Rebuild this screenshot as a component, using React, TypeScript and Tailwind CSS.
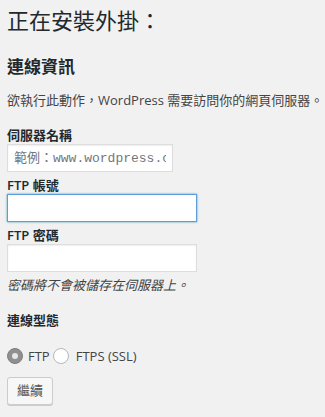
import { useState } from "react";

const font = "font-['Open_Sans','Noto_Sans_CJK_TC',sans-serif]";

function Field({ label, focused, placeholder }: { label: string; focused?: boolean; placeholder?: string }) {
  return (
    <div className="mt-[4px] flex flex-col">
      <label className="font-semibold leading-[18px] text-[#23282d]">{label}</label>
      <input
        className={`h-[28px] w-[190px] border bg-white px-[6px] outline-none ${
          focused
            ? "border-[#5b9dd9] shadow-[0_0_2px_rgba(30,140,190,0.8)]"
            : "border-[#ddd] shadow-[inset_0_1px_2px_rgba(0,0,0,0.07)]"
        }`}
        placeholder={placeholder}
      />
    </div>
  );
}

export default function App() {
  const [type, setType] = useState<"ftp" | "ftps">("ftp");

  const radio = (checked: boolean) => (
    <span
      className={`flex h-[16px] w-[16px] items-center justify-center rounded-full border ${
        checked ? "border-[#7e7e7e] bg-[#8f8f8f]" : "border-[#b4b9be] bg-white"
      }`}
    >
      {checked && <span className="h-[6px] w-[6px] rounded-full bg-[#e6e6e6]" />}
    </span>
  );

  return (
    <div className={`min-h-screen bg-[#f1f1f1] px-[7px] text-[13px] text-[#444] ${font}`}>
      <h1 className="pt-[6px] text-[22px] font-normal leading-[29px] text-[#23282d]">正在安裝外掛：</h1>

      <h2 className="mt-[21px] text-[17px] font-semibold leading-[22px] text-[#23282d]">連線資訊</h2>

      <p className="mt-[13px] leading-[18px] whitespace-nowrap">欲執行此動作，WordPress 需要訪問你的網頁伺服器。</p>

      <div className="mt-[17px] flex flex-col">
        <label className="font-semibold leading-[18px] text-[#23282d]">伺服器名稱</label>
        <input
          className="h-[28px] w-[166px] border border-[#ddd] bg-white px-[6px] font-['Liberation_Mono','Noto_Sans_CJK_TC',monospace] text-[13px] shadow-[inset_0_1px_2px_rgba(0,0,0,0.07)] outline-none placeholder:text-[#72777c]"
          placeholder="範例：www.wordpress.com"
        />
      </div>

      <Field label="FTP 帳號" focused />
      <Field label="FTP 密碼" />

      <p className="mt-[4px] italic leading-[18px]">密碼將不會被儲存在伺服器上。</p>

      <div className="mt-[17px] font-semibold leading-[18px] text-[#23282d]">連線型態</div>

      <div className="mt-[18px] flex h-[18px] items-center">
        <button onClick={() => setType("ftp")} className="flex items-center">
          {radio(type === "ftp")}
          <span className="ml-[5px] leading-[18px]">FTP</span>
        </button>
        <button onClick={() => setType("ftps")} className="ml-[3px] flex items-center">
          {radio(type === "ftps")}
          <span className="ml-[7px] leading-[18px]">FTPS (SSL)</span>
        </button>
      </div>

      <button className="mt-[12px] h-[28px] w-[46px] rounded-[3px] border border-[#ccc] bg-[#f7f7f7] text-[13px] text-[#555] shadow-[0_1px_0_#ccc]">
        繼續
      </button>
    </div>
  );
}
